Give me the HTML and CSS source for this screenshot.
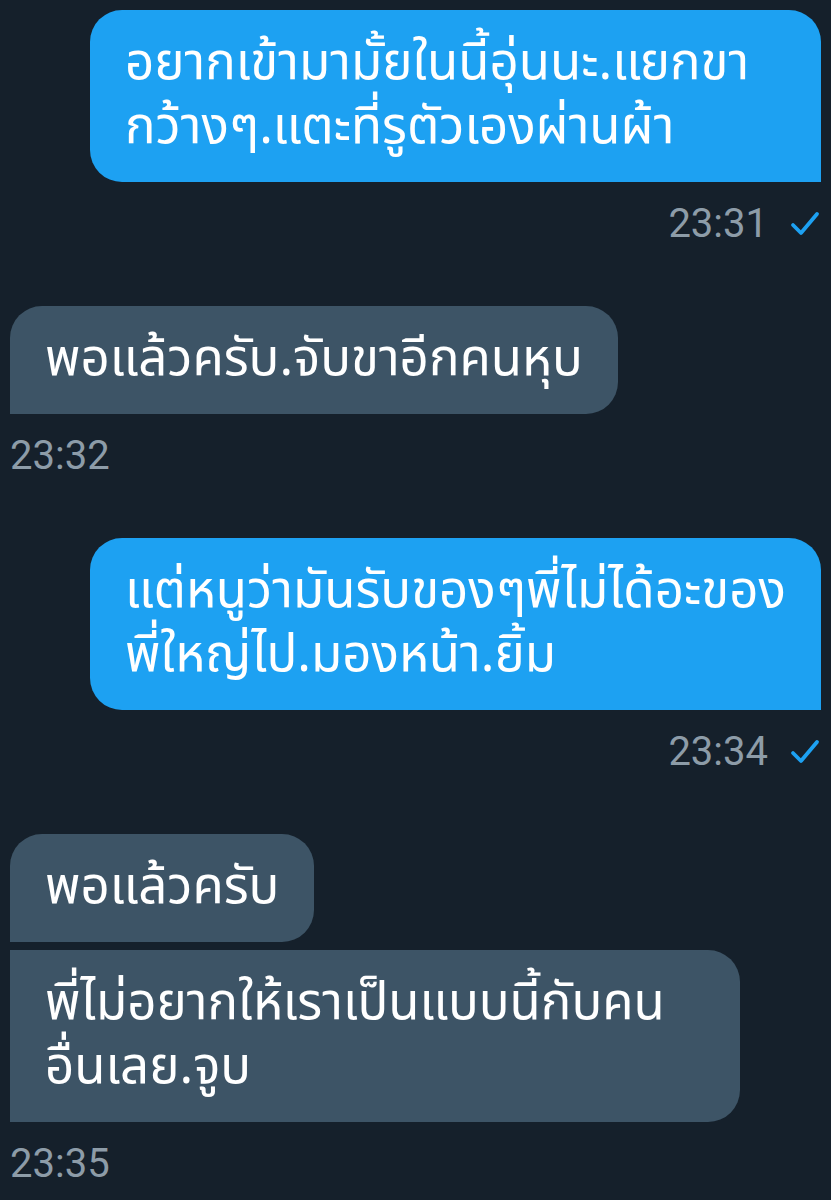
FILE: index.html
```html
<!DOCTYPE html>
<html lang="th">
<head>
<meta charset="utf-8">
<link rel="stylesheet" href="styles.css">
</head>
<body>
<div class="chat">
  <div class="group sent">
    <div class="bubble out wide">อยากเข้ามามั้ยในนี้อุ่นนะ.แยกขา<br>กว้างๆ.แตะที่รูตัวเองผ่านผ้า</div>
    <div class="meta"><span class="time">23:31</span><svg class="check" viewBox="0 0 30 30"><polyline points="3,16 11,24 27,5" fill="none" stroke="#1da1f2" stroke-width="3.8" stroke-linecap="round" stroke-linejoin="round"/></svg></div>
  </div>
  <div class="group recv">
    <div class="bubble in last">พอแล้วครับ.จับขาอีกคนหุบ</div>
    <div class="meta"><span class="time">23:32</span></div>
  </div>
  <div class="group sent">
    <div class="bubble out wide">แต่หนูว่ามันรับของๆพี่ไม่ได้อะของ<br>พี่ใหญ่ไป.มองหน้า.ยิ้ม</div>
    <div class="meta"><span class="time">23:34</span><svg class="check" viewBox="0 0 30 30"><polyline points="3,16 11,24 27,5" fill="none" stroke="#1da1f2" stroke-width="3.8" stroke-linecap="round" stroke-linejoin="round"/></svg></div>
  </div>
  <div class="group recv">
    <div class="bubble in first">พอแล้วครับ</div>
    <div class="bubble in wide mid">พี่ไม่อยากให้เราเป็นแบบนี้กับคน<br>อื่นเลย.จูบ</div>
    <div class="meta"><span class="time">23:35</span></div>
  </div>
</div>
</body>
</html>
```
FILE: styles.css
```css
html, body {
  margin: 0;
  padding: 0;
  background: #15202b;
}
body {
  font-family: "Noto Sans Thai", "Noto Sans", Roboto, sans-serif;
  color: #ffffff;
}
.chat {
  display: flex;
  flex-direction: column;
  gap: 58px;
  padding: 10px 10px 0 10px;
}
.group {
  display: flex;
  flex-direction: column;
  gap: 8px;
}
.sent {
  align-items: flex-end;
}
.recv {
  align-items: flex-start;
}
.bubble {
  box-sizing: border-box;
  font-size: 51px;
  line-height: 64px;
  padding: 22px 35px;
  border-radius: 32px;
  white-space: nowrap;
}
.wide {
  width: 731px;
}
.recv .wide {
  width: 730px;
}
.out {
  background: #1da1f2;
  border-bottom-right-radius: 0;
}
.in {
  background: #3d5466;
}
.in.last {
  border-bottom-left-radius: 0;
}
.in.first {
  border-bottom-left-radius: 0;
}
.in.mid {
  border-top-left-radius: 0;
  border-bottom-left-radius: 0;
}
.meta {
  display: flex;
  align-items: center;
  gap: 22px;
  height: 48px;
  margin-top: 10px;
  font-family: Roboto, "Liberation Sans", sans-serif;
}
.time {
  font-size: 40px;
  color: #8d9ca8;
  line-height: 48px;
}
.check {
  width: 30px;
  height: 30px;
  margin-right: 1px;
}
```
